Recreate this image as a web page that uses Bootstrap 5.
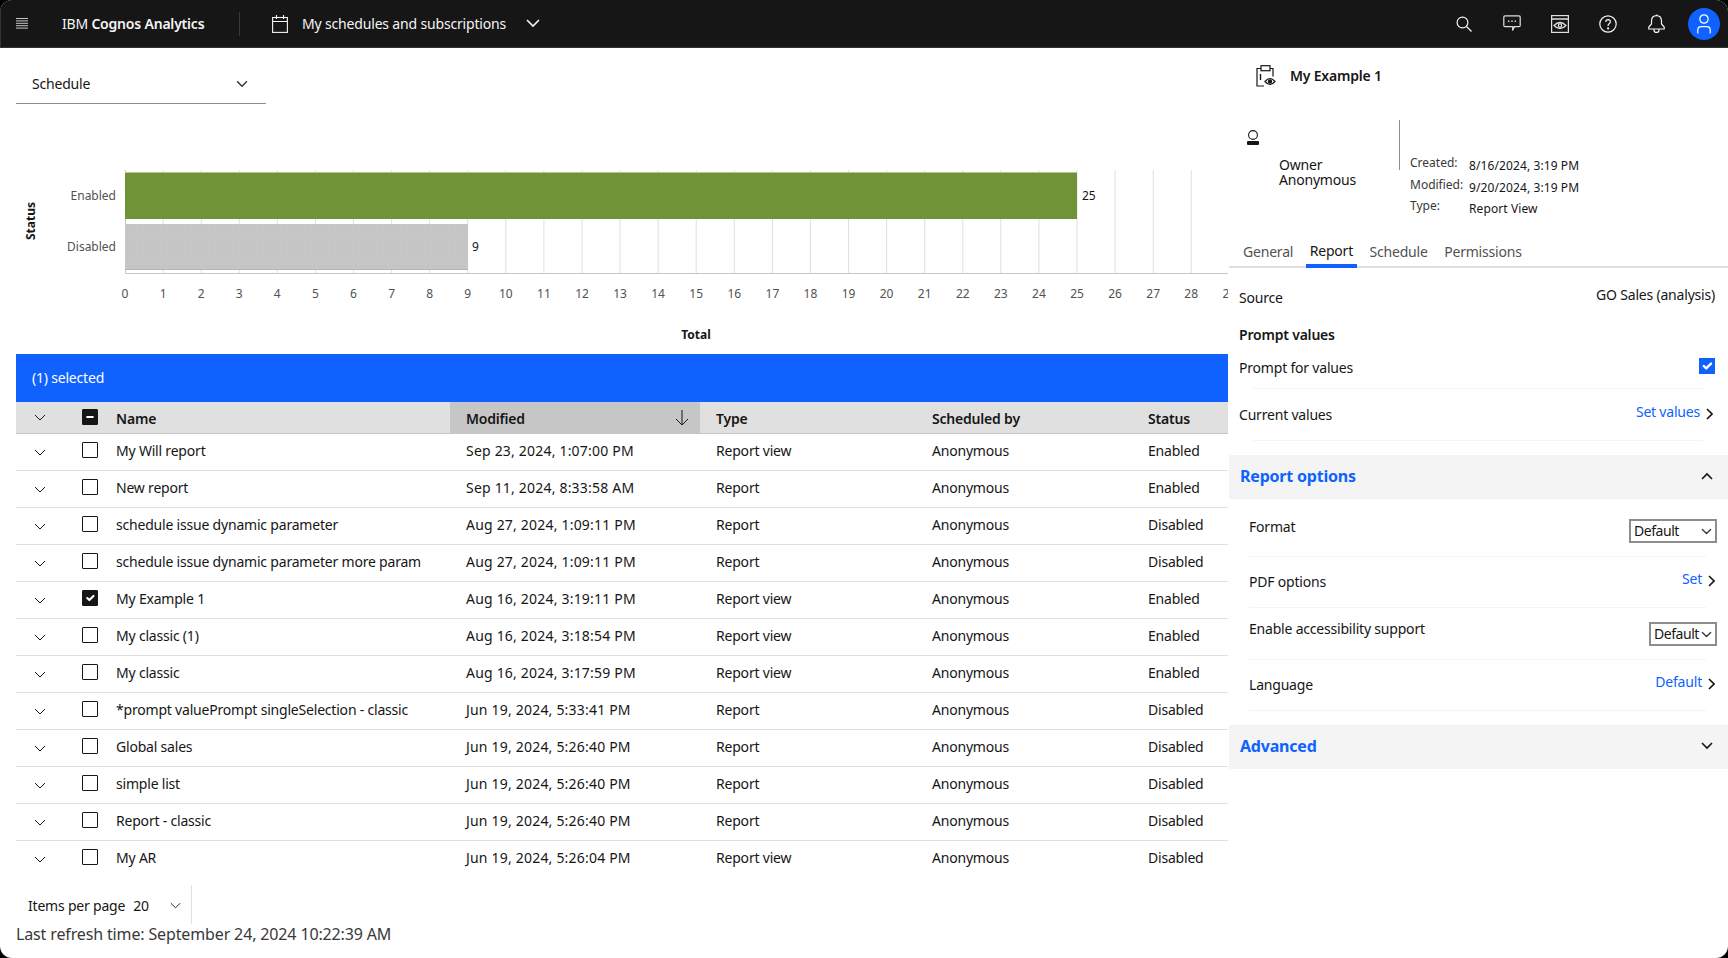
<!DOCTYPE html>
<html lang="en"><head><meta charset="utf-8"><title>My schedules and subscriptions</title>
<link href="https://cdn.jsdelivr.net/npm/bootstrap@5.3.0/dist/css/bootstrap.min.css" rel="stylesheet">
<style>
html,body{height:100%;background:#000;margin:0;overflow:hidden}
body{font-family:"Noto Sans","Liberation Sans",sans-serif;font-size:14px;color:#161616;letter-spacing:-.2px}
.frame{width:1728px;height:958px;background:#fff;border-radius:12px;overflow:hidden;display:flex;flex-direction:column}
.topbar{height:48px;background:#161616;color:#f4f4f4;padding:0 0 0 15px;flex:none;border-left:1px solid #333;border-bottom:1px solid #333}
.brand{margin-left:34px;width:177px;white-space:nowrap}
.brand b{font-weight:600}
.topsep{width:1px;height:24px;background:#393939}
.calicon{margin-left:32px}
.toptitle{margin-left:14px;white-space:nowrap;letter-spacing:-.17px}
.titlechev{margin-left:20px}
.topicons{margin-left:auto;gap:16px;padding-right:8px}
.topicon{width:32px;height:32px;display:flex;align-items:center;justify-content:center}
.avatar{background:#0f62fe;border-radius:50%;margin-left:0}
.main-area{flex:1;min-height:0}
.leftcol{width:1228px;padding:16px 0 0 16px;flex:none}
.rightcol{width:500px;flex:none;padding-left:1px}
.sched-select{width:250px;height:40px;border:0;border-bottom:1px solid #8d8d8d;border-radius:0;padding:0 16px;font-size:14px;letter-spacing:-.2px;color:#161616;background-position:right 18px center;background-size:12px}
.chart{display:block;margin-top:0}
.chart text{font-family:"Noto Sans","Liberation Sans",sans-serif;font-size:12px;fill:#525252;letter-spacing:0}
.chart .axt{font-weight:700;fill:#161616}
.chart .val{fill:#161616}
.selbar{height:48px;background:#0f62fe;color:#fff;padding:0 16px 2px;display:flex;align-items:center}
.sched-tbl{table-layout:fixed;width:1212px;margin:0;--bs-table-bg:#fff}
.sched-tbl th,.sched-tbl td{padding:0 0 2px 16px;vertical-align:middle;white-space:nowrap;border-bottom:1px solid #e0e0e0;color:#161616}
.sched-tbl thead th{height:31px;padding:2px 0 0 16px;background:#e0e0e0;font-weight:600;border-bottom:1px solid #c6c6c6}
.sched-tbl thead th.sorted{background:#c6c6c6 radial-gradient(#d4d4d4 .5px,transparent .7px) 0 0/4px 4px}
.sched-tbl tbody td{height:37px}
.sched-tbl tbody tr:last-child td{border-bottom:0}
.sched-tbl td:nth-child(4){letter-spacing:.2px}
.sched-tbl .c-exp{padding:0 0 2px 18px}
.sched-tbl .c-chk{padding:0 0 0 18px}
.sched-tbl thead th.c-chk{padding:0 0 0 18px}
.sched-tbl tbody .c-chk .tick{margin-top:-3px}
.tick[type=checkbox]{width:16px;height:16px;margin:0;display:block;border:1px solid #161616;border-radius:1px}
.tick[type=checkbox]:checked,.tick[type=checkbox]:indeterminate{background-color:#161616;border-color:#161616}
.sortarrow{float:right;margin:2px 11px 0 0}
.pager{height:39px;width:176px;margin-top:8px;border-right:1px solid #e0e0e0;padding:2px 0 0 12px;gap:8px}
.pager .pp{margin-left:13px}
.refresh{font-size:16px;line-height:20px;color:#393939;letter-spacing:-.14px}
.paneltitle{height:55px;padding-left:27px;gap:14px;font-weight:600}
.ownerblock{margin-top:17px;height:100px}
.ownerleft{width:170px;padding:10px 0 0 18px}
.ownername{margin:12px 0 0 32px;line-height:15px}
.vline{width:1px;height:50px;background:#8d8d8d;flex:none}
.meta{margin-left:10px;padding-top:33px;display:grid;grid-template-columns:59px auto;grid-auto-rows:21.5px;font-size:12px;line-height:20px;color:#393939;letter-spacing:0}
.meta span:nth-child(even){padding-top:3px;color:#161616;letter-spacing:.1px}
.tabs{margin-top:15px;height:33px;padding-left:10px;border-bottom:2px solid #e0e0e0;gap:8.5px}
.tabitem{padding:7px 4px 0;height:33px;color:#525252;line-height:20px}
.tabitem.on{color:#161616;border-bottom:4px solid #0f62fe;padding-top:6px}
.pbody{padding:20px 13px 0 10px}
.pline{display:flex;justify-content:space-between;line-height:20px}
.up3{position:relative;top:-3px}
.pvhead{font-weight:600;margin-top:17px;line-height:20px}
.rule{height:1px;background:#f4f4f4;margin:0 12px 0 14px}
.pgap1{margin-top:13px;height:30px}
.pgap2{margin-top:16px;height:35px}
.linkv{color:#0f62fe;text-decoration:none;display:flex;align-items:flex-start;gap:6px;margin-right:2px}
.linkv svg{margin-top:6px}
.bluecheck[type=checkbox]{width:16px;height:16px;margin:0;border:0;border-radius:0;background-color:#0f62fe}
.acc{height:44px;background:#f4f4f4;padding:0 15px 2px 11px;color:#0f62fe;font-weight:700;font-size:16px}
.acctop{margin-top:14px}
.opts{padding:18px 11px 0 20px}
.opts .rule{margin:0 11px 0 0}
.rfmt{height:39px}
.rpdf{margin-top:15px;height:35px}
.racc{margin-top:11px;height:40px}
.mini{height:24px;padding:0 14px 0 3px;font-size:14px;letter-spacing:-.45px;line-height:20px;border:2px solid #8d8d8d;border-radius:0;color:#161616;background-position:right 3px center;background-size:11px;flex:none}
.mini.w88{width:88px;margin-top:2px}
.mini.w68{width:68px;margin-top:3px}
</style></head><body>
<div class="frame">
<header class="topbar d-flex align-items-center">
  <svg width="12" height="12" viewBox="0 0 12 12" fill="none" stroke="#c6c6c6" stroke-width="1"><path d="M0 .5h12M0 2.9h12M0 5.3h12M0 7.7h12M0 10.1h12"/></svg>
  <div class="brand">IBM <b>Cognos Analytics</b></div>
  <div class="topsep"></div>
  <svg class="calicon" width="16" height="18" viewBox="0 0 16 18" fill="none" stroke="#f4f4f4" stroke-width="1.1"><rect x=".6" y="2.5" width="14.8" height="14.9"/><path d="M.6 6.5h14.8M4.5 0v4M11.5 0v4"/></svg>
  <div class="toptitle">My schedules and subscriptions</div>
  <svg class="titlechev" width="14" height="9" viewBox="0 0 14 9" fill="none" stroke="#f4f4f4" stroke-width="1.6"><path d="M1 1l6 6 6-6"/></svg>
  <div class="topicons d-flex align-items-center">
    <div class="topicon"><svg width="16" height="16" viewBox="0 0 16 16" fill="none" stroke="#f4f4f4" stroke-width="1.2"><circle cx="6.5" cy="6.5" r="5.4"/><path d="M10.5 10.5l5 5"/></svg></div>
    <div class="topicon"><svg width="18" height="17" viewBox="0 0 18 17" fill="none" stroke="#e0e0e0" stroke-width="1.2"><path d="M2 .8h14q1.2 0 1.2 1.2v8.5q0 1.2-1.2 1.2h-4.5l-2 3.8.4-3.8H2q-1.2 0-1.2-1.2V2Q.8.8 2 .8z"/><path d="M5 6.2h1.4M8.3 6.2h1.4M11.6 6.2H13" stroke-width="1.6"/></svg></div>
    <div class="topicon"><svg width="18" height="18" viewBox="0 0 18 18" fill="none" stroke="#e0e0e0" stroke-width="1.2"><rect x=".6" y=".6" width="16.8" height="16.8"/><path d="M.6 4h16.8" stroke-width="1.6"/><path d="M3 10.5q6-6 12 0-6 6-12 0z"/><circle cx="9" cy="10.5" r="1.7"/></svg></div>
    <div class="topicon"><svg width="18" height="18" viewBox="0 0 18 18" fill="none" stroke="#f4f4f4" stroke-width="1.2"><circle cx="9" cy="9" r="8.2"/><path d="M6.8 7q0-2.3 2.3-2.3t2.2 2.1q0 1.2-1.2 1.9-1 .6-1 1.9v.5"/><circle cx="9.1" cy="13.4" r=".5" fill="#f4f4f4"/></svg></div>
    <div class="topicon"><svg width="17" height="19" viewBox="0 0 17 19" fill="none" stroke="#f4f4f4" stroke-width="1.2"><path d="M8.5 1.6q5 0 5 5.4v3l2.7 3V15H.8v-2l2.7-3V7q0-5.4 5-5.4zM8.5.4v1.2M6 15v1.2q0 2.2 2.5 2.2t2.5-2.2V15"/></svg></div>
    <div class="topicon avatar"><svg width="14" height="20" viewBox="0 0 14 20" fill="none" stroke="#fff" stroke-width="1.2"><circle cx="7" cy="5" r="4.2"/><path d="M.8 19.5V16q0-3.3 3.3-3.3h5.8q3.3 0 3.3 3.3v3.5"/></svg></div>
  </div>
</header>
<div class="main-area d-flex">
  <section class="leftcol">
    <select class="form-select sched-select"><option>Schedule</option></select>
    <svg class="chart" width="1212" height="250" viewBox="16 104 1212 250">
      <defs><pattern id="dots" width="6" height="6" patternUnits="userSpaceOnUse"><rect width="6" height="6" fill="#c6c6c6"/><circle cx="2" cy="2" r=".6" fill="#b4b4b4"/></pattern></defs>
      <path stroke="#e0e0e0" fill="none" d="M163.1 170v103M201.2 170v103M239.2 170v103M277.3 170v103M315.4 170v103M353.5 170v103M391.6 170v103M429.6 170v103M467.7 170v103M505.8 170v103M543.9 170v103M582 170v103M620 170v103M658.1 170v103M696.2 170v103M734.3 170v103M772.4 170v103M810.4 170v103M848.5 170v103M886.6 170v103M924.7 170v103M962.8 170v103M1000.8 170v103M1038.9 170v103M1077 170v103M1115.1 170v103M1153.2 170v103M1191.2 170v103"/>
      <path stroke="#c6c6c6" fill="none" d="M125.5 170v103.5H1228"/>
      <rect x="125" y="172" width="952" height="47" fill="#6f9336"/>
      <path d="M125 172.5h952" stroke="#b5c98f"/>
      <rect x="125" y="224" width="343" height="46" fill="url(#dots)"/>
      <path d="M125 269.5h343" stroke="#b4b4b4"/>
      <g text-anchor="end"><text x="116" y="200">Enabled</text><text x="116" y="251">Disabled</text></g>
      <text class="val" x="1082" y="200">25</text><text class="val" x="472" y="251">9</text>
      <g text-anchor="middle">
        <text x="125" y="298">0</text><text x="163.1" y="298">1</text><text x="201.2" y="298">2</text><text x="239.2" y="298">3</text><text x="277.3" y="298">4</text><text x="315.4" y="298">5</text><text x="353.5" y="298">6</text><text x="391.6" y="298">7</text><text x="429.6" y="298">8</text><text x="467.7" y="298">9</text><text x="505.8" y="298">10</text><text x="543.9" y="298">11</text><text x="582" y="298">12</text><text x="620" y="298">13</text><text x="658.1" y="298">14</text><text x="696.2" y="298">15</text><text x="734.3" y="298">16</text><text x="772.4" y="298">17</text><text x="810.4" y="298">18</text><text x="848.5" y="298">19</text><text x="886.6" y="298">20</text><text x="924.7" y="298">21</text><text x="962.8" y="298">22</text><text x="1000.8" y="298">23</text><text x="1038.9" y="298">24</text><text x="1077" y="298">25</text><text x="1115.1" y="298">26</text><text x="1153.2" y="298">27</text><text x="1191.2" y="298">28</text><text x="1229.3" y="298">29</text>
        <text class="axt" x="696" y="339">Total</text>
        <text class="axt" transform="translate(35 221) rotate(-90)">Status</text>
      </g>
    </svg>
    <div class="selbar">(1) selected</div>
    <table class="table sched-tbl">
      <colgroup><col style="width:48px"><col style="width:36px"><col style="width:350px"><col style="width:250px"><col style="width:216px"><col style="width:216px"><col style="width:96px"></colgroup>
      <thead><tr><th class="c-exp"><svg width="12" height="7" viewBox="0 0 12 7" fill="none" stroke="#161616"><path d="M1 1l5 5 5-5"/></svg></th><th class="c-chk"><input id="allrows" class="form-check-input tick" type="checkbox" aria-label="all"></th><th>Name</th><th class="sorted">Modified<svg class="sortarrow" width="14" height="16" viewBox="0 0 14 16" fill="none" stroke="#161616"><path d="M7 0v15M1 9l6 6 6-6"/></svg></th><th>Type</th><th>Scheduled by</th><th>Status</th></tr></thead>
      <tbody>
      <tr><td class="c-exp"><svg width="12" height="7" viewBox="0 0 12 7" fill="none" stroke="#161616"><path d="M1 1l5 5 5-5"/></svg></td><td class="c-chk"><input class="form-check-input tick" type="checkbox" aria-label="row"></td><td>My Will report</td><td>Sep 23, 2024, 1:07:00 PM</td><td>Report view</td><td>Anonymous</td><td>Enabled</td></tr>
      <tr><td class="c-exp"><svg width="12" height="7" viewBox="0 0 12 7" fill="none" stroke="#161616"><path d="M1 1l5 5 5-5"/></svg></td><td class="c-chk"><input class="form-check-input tick" type="checkbox" aria-label="row"></td><td>New report</td><td>Sep 11, 2024, 8:33:58 AM</td><td>Report</td><td>Anonymous</td><td>Enabled</td></tr>
      <tr><td class="c-exp"><svg width="12" height="7" viewBox="0 0 12 7" fill="none" stroke="#161616"><path d="M1 1l5 5 5-5"/></svg></td><td class="c-chk"><input class="form-check-input tick" type="checkbox" aria-label="row"></td><td>schedule issue dynamic parameter</td><td>Aug 27, 2024, 1:09:11 PM</td><td>Report</td><td>Anonymous</td><td>Disabled</td></tr>
      <tr><td class="c-exp"><svg width="12" height="7" viewBox="0 0 12 7" fill="none" stroke="#161616"><path d="M1 1l5 5 5-5"/></svg></td><td class="c-chk"><input class="form-check-input tick" type="checkbox" aria-label="row"></td><td>schedule issue dynamic parameter more param</td><td>Aug 27, 2024, 1:09:11 PM</td><td>Report</td><td>Anonymous</td><td>Disabled</td></tr>
      <tr><td class="c-exp"><svg width="12" height="7" viewBox="0 0 12 7" fill="none" stroke="#161616"><path d="M1 1l5 5 5-5"/></svg></td><td class="c-chk"><input class="form-check-input tick" type="checkbox" checked aria-label="row"></td><td>My Example 1</td><td>Aug 16, 2024, 3:19:11 PM</td><td>Report view</td><td>Anonymous</td><td>Enabled</td></tr>
      <tr><td class="c-exp"><svg width="12" height="7" viewBox="0 0 12 7" fill="none" stroke="#161616"><path d="M1 1l5 5 5-5"/></svg></td><td class="c-chk"><input class="form-check-input tick" type="checkbox" aria-label="row"></td><td>My classic (1)</td><td>Aug 16, 2024, 3:18:54 PM</td><td>Report view</td><td>Anonymous</td><td>Enabled</td></tr>
      <tr><td class="c-exp"><svg width="12" height="7" viewBox="0 0 12 7" fill="none" stroke="#161616"><path d="M1 1l5 5 5-5"/></svg></td><td class="c-chk"><input class="form-check-input tick" type="checkbox" aria-label="row"></td><td>My classic</td><td>Aug 16, 2024, 3:17:59 PM</td><td>Report view</td><td>Anonymous</td><td>Enabled</td></tr>
      <tr><td class="c-exp"><svg width="12" height="7" viewBox="0 0 12 7" fill="none" stroke="#161616"><path d="M1 1l5 5 5-5"/></svg></td><td class="c-chk"><input class="form-check-input tick" type="checkbox" aria-label="row"></td><td>*prompt valuePrompt singleSelection - classic</td><td>Jun 19, 2024, 5:33:41 PM</td><td>Report</td><td>Anonymous</td><td>Disabled</td></tr>
      <tr><td class="c-exp"><svg width="12" height="7" viewBox="0 0 12 7" fill="none" stroke="#161616"><path d="M1 1l5 5 5-5"/></svg></td><td class="c-chk"><input class="form-check-input tick" type="checkbox" aria-label="row"></td><td>Global sales</td><td>Jun 19, 2024, 5:26:40 PM</td><td>Report</td><td>Anonymous</td><td>Disabled</td></tr>
      <tr><td class="c-exp"><svg width="12" height="7" viewBox="0 0 12 7" fill="none" stroke="#161616"><path d="M1 1l5 5 5-5"/></svg></td><td class="c-chk"><input class="form-check-input tick" type="checkbox" aria-label="row"></td><td>simple list</td><td>Jun 19, 2024, 5:26:40 PM</td><td>Report</td><td>Anonymous</td><td>Disabled</td></tr>
      <tr><td class="c-exp"><svg width="12" height="7" viewBox="0 0 12 7" fill="none" stroke="#161616"><path d="M1 1l5 5 5-5"/></svg></td><td class="c-chk"><input class="form-check-input tick" type="checkbox" aria-label="row"></td><td>Report - classic</td><td>Jun 19, 2024, 5:26:40 PM</td><td>Report</td><td>Anonymous</td><td>Disabled</td></tr>
      <tr><td class="c-exp"><svg width="12" height="7" viewBox="0 0 12 7" fill="none" stroke="#161616"><path d="M1 1l5 5 5-5"/></svg></td><td class="c-chk"><input class="form-check-input tick" type="checkbox" aria-label="row"></td><td>My AR</td><td>Jun 19, 2024, 5:26:04 PM</td><td>Report view</td><td>Anonymous</td><td>Disabled</td></tr>
      </tbody>
    </table>
    <div class="pager d-flex align-items-center"><span>Items per page</span><span>20</span><svg class="pp" width="11" height="7" viewBox="0 0 12 7" fill="none" stroke="#161616"><path d="M1 1l5 5 5-5"/></svg></div>
    <div class="refresh">Last refresh time: September 24, 2024 10:22:39 AM</div>
  </section>
  <aside class="rightcol">
    <div class="paneltitle d-flex align-items-center">
      <svg width="20" height="22" viewBox="0 0 20 22" fill="none" stroke="#161616" stroke-width="1.2"><path d="M5 3.5H1v17.5h7M14 3.5h3v8"/><rect x="5" y=".7" width="9" height="5"/><path d="M4.5 9v6" stroke-width="1.4"/><path d="M9 16.5q5-6 10 0-5 6-10 0z"/><circle cx="14" cy="16.5" r="1.6" fill="#161616"/></svg>
      <div>My Example 1</div>
    </div>
    <div class="ownerblock d-flex">
      <div class="ownerleft">
        <svg class="d-block" width="12" height="15" viewBox="0 0 12 15"><circle cx="6" cy="5" r="4.4" fill="none" stroke="#161616" stroke-width="1.1"/><rect y="11" width="12" height="4" rx="1" fill="#161616"/></svg>
        <div class="ownername">Owner<br>Anonymous</div>
      </div>
      <div class="vline"></div>
      <div class="meta"><span>Created:</span><span>8/16/2024, 3:19 PM</span><span>Modified:</span><span>9/20/2024, 3:19 PM</span><span>Type:</span><span>Report View</span></div>
    </div>
    <nav class="tabs d-flex"><div class="tabitem">General</div><div class="tabitem on">Report</div><div class="tabitem">Schedule</div><div class="tabitem">Permissions</div></nav>
    <div class="pbody">
      <div class="pline"><span>Source</span><span class="up3">GO Sales (analysis)</span></div>
      <div class="pvhead">Prompt values</div>
      <div class="pline pgap1"><span>Prompt for values</span><input class="form-check-input bluecheck" type="checkbox" checked aria-label="prompt"></div>
      <div class="rule"></div>
      <div class="pline pgap2"><span>Current values</span><a class="linkv up3" href="#">Set values<svg width="7" height="12" viewBox="0 0 7 12" fill="none" stroke="#161616" stroke-width="1.6"><path d="M1 1l5 5-5 5"/></svg></a></div>
      <div class="rule"></div>
    </div>
    <div class="acc acctop d-flex align-items-center justify-content-between"><span>Report options</span><svg width="12" height="8" viewBox="0 0 12 8" fill="none" stroke="#161616" stroke-width="1.6"><path d="M1 7l5-5 5 5"/></svg></div>
    <div class="opts">
      <div class="pline rfmt"><span>Format</span><select class="form-select mini w88"><option>Default</option></select></div>
      <div class="rule"></div>
      <div class="pline rpdf"><span>PDF options</span><a class="linkv up3" href="#">Set<svg width="7" height="12" viewBox="0 0 7 12" fill="none" stroke="#161616" stroke-width="1.6"><path d="M1 1l5 5-5 5"/></svg></a></div>
      <div class="rule"></div>
      <div class="pline racc"><span>Enable accessibility support</span><select class="form-select mini w68"><option>Default</option></select></div>
      <div class="rule"></div>
      <div class="pline rpdf"><span>Language</span><a class="linkv up3" href="#">Default<svg width="7" height="12" viewBox="0 0 7 12" fill="none" stroke="#161616" stroke-width="1.6"><path d="M1 1l5 5-5 5"/></svg></a></div>
      <div class="rule"></div>
    </div>
    <div class="acc acctop d-flex align-items-center justify-content-between"><span>Advanced</span><svg width="12" height="8" viewBox="0 0 12 8" fill="none" stroke="#161616" stroke-width="1.6"><path d="M1 1l5 5 5-5"/></svg></div>
  </aside>
</div>
</div>
<script src="https://cdn.jsdelivr.net/npm/bootstrap@5.3.0/dist/js/bootstrap.bundle.min.js"></script>
<script>document.getElementById('allrows').indeterminate=true;</script>
</body></html>
